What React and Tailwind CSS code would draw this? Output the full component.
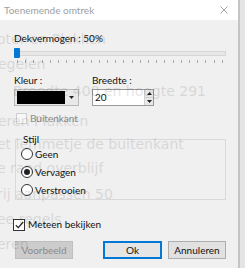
import React from "react";

const ticks = Array.from({ length: 26 }, (_, i) => i);

function Radio({ checked, label }) {
  return (
    <div className="flex items-center h-[18px] gap-[2px]">
      <span className="w-[12px] h-[12px] rounded-full border border-[#333] bg-white flex items-center justify-center">
        {checked && <span className="w-[6px] h-[6px] rounded-full bg-[#222]" />}
      </span>
      <span>{label}</span>
    </div>
  );
}

function Button({ children, primary, disabled, className }) {
  return (
    <button
      className={
        "h-[18px] flex items-center justify-center " +
        (disabled
          ? "bg-[#cccccc] border border-[#bfbfbf] text-[#8a8a8a] "
          : primary
          ? "bg-[#e5e5e5] border-2 border-[#0078d7] text-[#111] "
          : "bg-[#e1e1e1] border border-[#adadad] text-[#111] ") +
        className
      }
    >
      {children}
    </button>
  );
}

function Ghost() {
  return (
    <div
      className="absolute inset-0 pointer-events-none flex flex-col pt-[29px] text-[14px] leading-[20px] text-black opacity-[0.1] whitespace-nowrap"
      style={{ fontFamily: '"DejaVu Sans", sans-serif' }}
    >
      <div className="h-[25px] -ml-[3px]">oter en Plakken</div>
      <div className="h-[27px] -ml-[2px]">egelen</div>
      <div className="h-[30px] ml-[13px]">Breedte 400 en hoogte 291</div>
      <div className="h-[23px] -ml-[2px]">eren Plukken</div>
      <div className="h-[24px] -ml-[3px]">et lemmetje de buitenkant</div>
      <div className="h-[26px] -ml-[3px]">e rand overblijf</div>
      <div className="h-[25px] -ml-[3px]">rij aanpassen 50</div>
      <div className="h-[25px] -ml-[3px]">ee regels</div>
      <div className="h-[25px] -ml-[3px]">eren</div>
    </div>
  );
}

export default function App() {
  return (
    <div
      className="relative w-[245px] h-[268px] overflow-hidden bg-[#e4e4e4] flex text-[10px] text-[#111]"
      style={{ fontFamily: 'Lato, "Noto Sans", sans-serif' }}
    >
      <div className="w-[240px] h-full flex flex-col bg-[#f0f0f0] border-r-2 border-[#c4c4c4]">
        <div className="h-[20px] bg-white flex items-center justify-between pl-[4px] pr-[10px] text-[#a0a0a0]">
          <span>Toenemende omtrek</span>
          <svg width="8" height="8" viewBox="0 0 8 8" stroke="#9a9a9a" strokeWidth="0.9">
            <path d="M0.5 0.5L7.5 7.5M7.5 0.5L0.5 7.5" />
          </svg>
        </div>

        <div className="flex flex-col pl-[14px] pr-[12px] pt-[11px]">
          <div className="h-[14px] leading-[14px]">Dekvermogen : 50%</div>

          <div className="relative mt-[2px] h-[12px] flex items-center">
            <div className="w-full h-[5px] bg-[#e7e7e7] border border-[#d6d6d6]" />
            <div className="absolute left-0 top-[1px] w-[6px] h-[10px] bg-[#0078d7] rounded-[1px]" />
          </div>
          <div className="mt-[1px] h-[3px] flex justify-between px-[3px]">
            {ticks.map((i) => (
              <span key={i} className="w-px h-[3px] bg-[#a8a8a8]" />
            ))}
          </div>

          <div className="mt-[10px] flex gap-[13px]">
            <div className="flex flex-col">
              <div className="h-[14px] leading-[14px]">Kleur :</div>
              <div className="mt-[2px] w-[65px] h-[17px] border border-[#b8b8b8] bg-[#e8e8e8] flex items-center pl-[2px]">
                <div className="w-[48px] h-[13px] bg-black" />
                <div className="flex-1 flex items-center justify-center">
                  <svg width="5" height="3" viewBox="0 0 5 3">
                    <path d="M0 0H5L2.5 3Z" fill="#222" />
                  </svg>
                </div>
              </div>
            </div>
            <div className="flex flex-col">
              <div className="h-[14px] leading-[14px]">Breedte :</div>
              <div className="mt-[2px] w-[62px] h-[17px] border border-[#9a9a9a] bg-white flex items-center pl-[2px]">
                <span className="flex-1">20</span>
                <div className="w-[9px] h-full flex flex-col border-l border-[#d0d0d0]">
                  <div className="flex-1 bg-[#e8e8e8] flex items-center justify-center border-b border-[#d0d0d0]">
                    <svg width="5" height="3" viewBox="0 0 5 3">
                      <path d="M0 3H5L2.5 0Z" fill="#222" />
                    </svg>
                  </div>
                  <div className="flex-1 bg-[#e8e8e8] flex items-center justify-center">
                    <svg width="5" height="3" viewBox="0 0 5 3">
                      <path d="M0 0H5L2.5 3Z" fill="#222" />
                    </svg>
                  </div>
                </div>
              </div>
            </div>
          </div>

          <div className="mt-[5px] flex items-center gap-[3px] text-[#8c8c8c]">
            <span className="ml-[2px] w-[11px] h-[11px] border border-[#cfcfcf] bg-[#f7f7f7]" />
            <span>Buitenkant</span>
          </div>

          <div className="relative mt-[13px] ml-[1px] w-[211px] h-[61px] border border-[#d9d9d9] flex flex-col pt-[5px] pl-[5px]">
            <span className="absolute -top-[8px] left-[6px] px-[1px] bg-[#f0f0f0] leading-[14px]">Stijl</span>
            <Radio label="Geen" />
            <Radio checked label="Vervagen" />
            <Radio label="Verstrooien" />
          </div>

          <div className="mt-[17px] flex items-center gap-[3px] -ml-[1px]">
            <span className="w-[12px] h-[12px] border border-[#333] bg-white flex items-center justify-center">
              <svg width="9" height="8" viewBox="0 0 9 8" fill="none" stroke="#222" strokeWidth="1.2">
                <path d="M0.8 4.2L3.3 6.6L8.2 1" />
              </svg>
            </span>
            <span>Meteen bekijken</span>
          </div>

          <div className="mt-[9px] flex">
            <Button disabled className="ml-[1px] w-[58px]">Voorbeeld</Button>
            <Button primary className="ml-[30px] w-[59px]">Ok</Button>
            <Button className="ml-[6px] w-[58px]">Annuleren</Button>
          </div>
        </div>
      </div>
      <Ghost />
    </div>
  );
}
